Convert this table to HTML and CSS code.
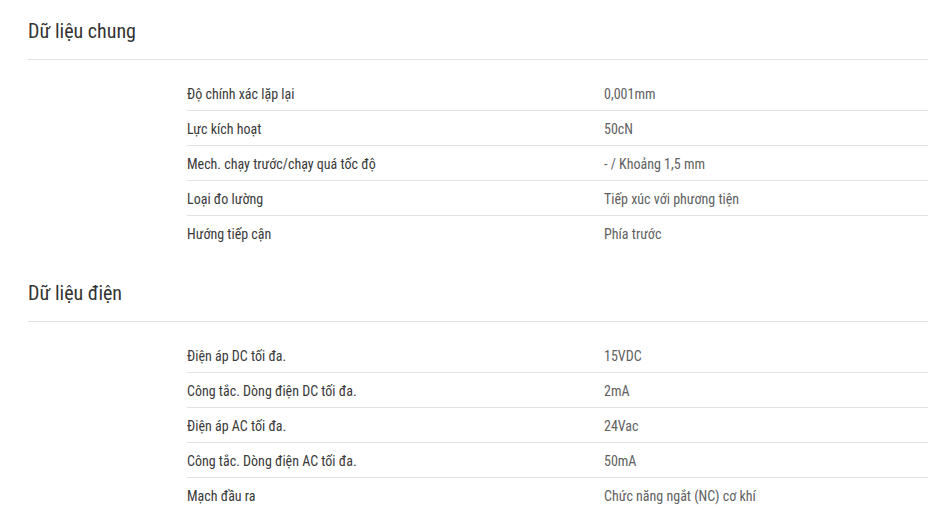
FILE: index.html
```html
<!DOCTYPE html>
<html lang="vi">
<head>
<meta charset="utf-8">
<link rel="stylesheet" href="styles.css">
</head>
<body>
<section class="spec">
  <h2 class="spec-title">Dữ liệu chung</h2>
  <div class="spec-table">
    <div class="row"><div class="label">Độ chính xác lặp lại</div><div class="value">0,001mm</div></div>
    <div class="row"><div class="label">Lực kích hoạt</div><div class="value">50cN</div></div>
    <div class="row"><div class="label">Mech. chạy trước/chạy quá tốc độ</div><div class="value">- / Khoảng 1,5 mm</div></div>
    <div class="row"><div class="label">Loại đo lường</div><div class="value">Tiếp xúc với phương tiện</div></div>
    <div class="row"><div class="label">Hướng tiếp cận</div><div class="value">Phía trước</div></div>
  </div>
</section>
<section class="spec">
  <h2 class="spec-title">Dữ liệu điện</h2>
  <div class="spec-table">
    <div class="row"><div class="label">Điện áp DC tối đa.</div><div class="value">15VDC</div></div>
    <div class="row"><div class="label">Công tắc. Dòng điện DC tối đa.</div><div class="value">2mA</div></div>
    <div class="row"><div class="label">Điện áp AC tối đa.</div><div class="value">24Vac</div></div>
    <div class="row"><div class="label">Công tắc. Dòng điện AC tối đa.</div><div class="value">50mA</div></div>
    <div class="row"><div class="label">Mạch đầu ra</div><div class="value">Chức năng ngắt (NC) cơ khí</div></div>
  </div>
</section>
</body>
</html>
```
FILE: styles.css
```css
html, body {
  margin: 0;
  padding: 0;
  background: #fff;
}
body {
  padding-left: 28px;
  font-family: Roboto, "Noto Sans", sans-serif;
  font-stretch: condensed;
  color: #333;
}
.spec {
  margin-bottom: 11px;
}
.spec-title {
  margin: 0;
  padding: 19px 0 16px;
  font-size: 20px;
  line-height: 24px;
  font-weight: 400;
  color: #333;
  border-bottom: 1px solid #e2e2e2;
}
.spec-table {
  margin: 16px 0 0 159px;
}
.row {
  display: grid;
  grid-template-columns: 417px 1fr;
  box-sizing: border-box;
  height: 35px;
  padding-top: 1px;
  align-items: center;
  font-size: 14px;
  border-bottom: 1px solid #e2e2e2;
}
.row:last-child {
  border-bottom-color: transparent;
}
.label {
  color: #3a3a3a;
}
.value {
  color: #616161;
}
```
